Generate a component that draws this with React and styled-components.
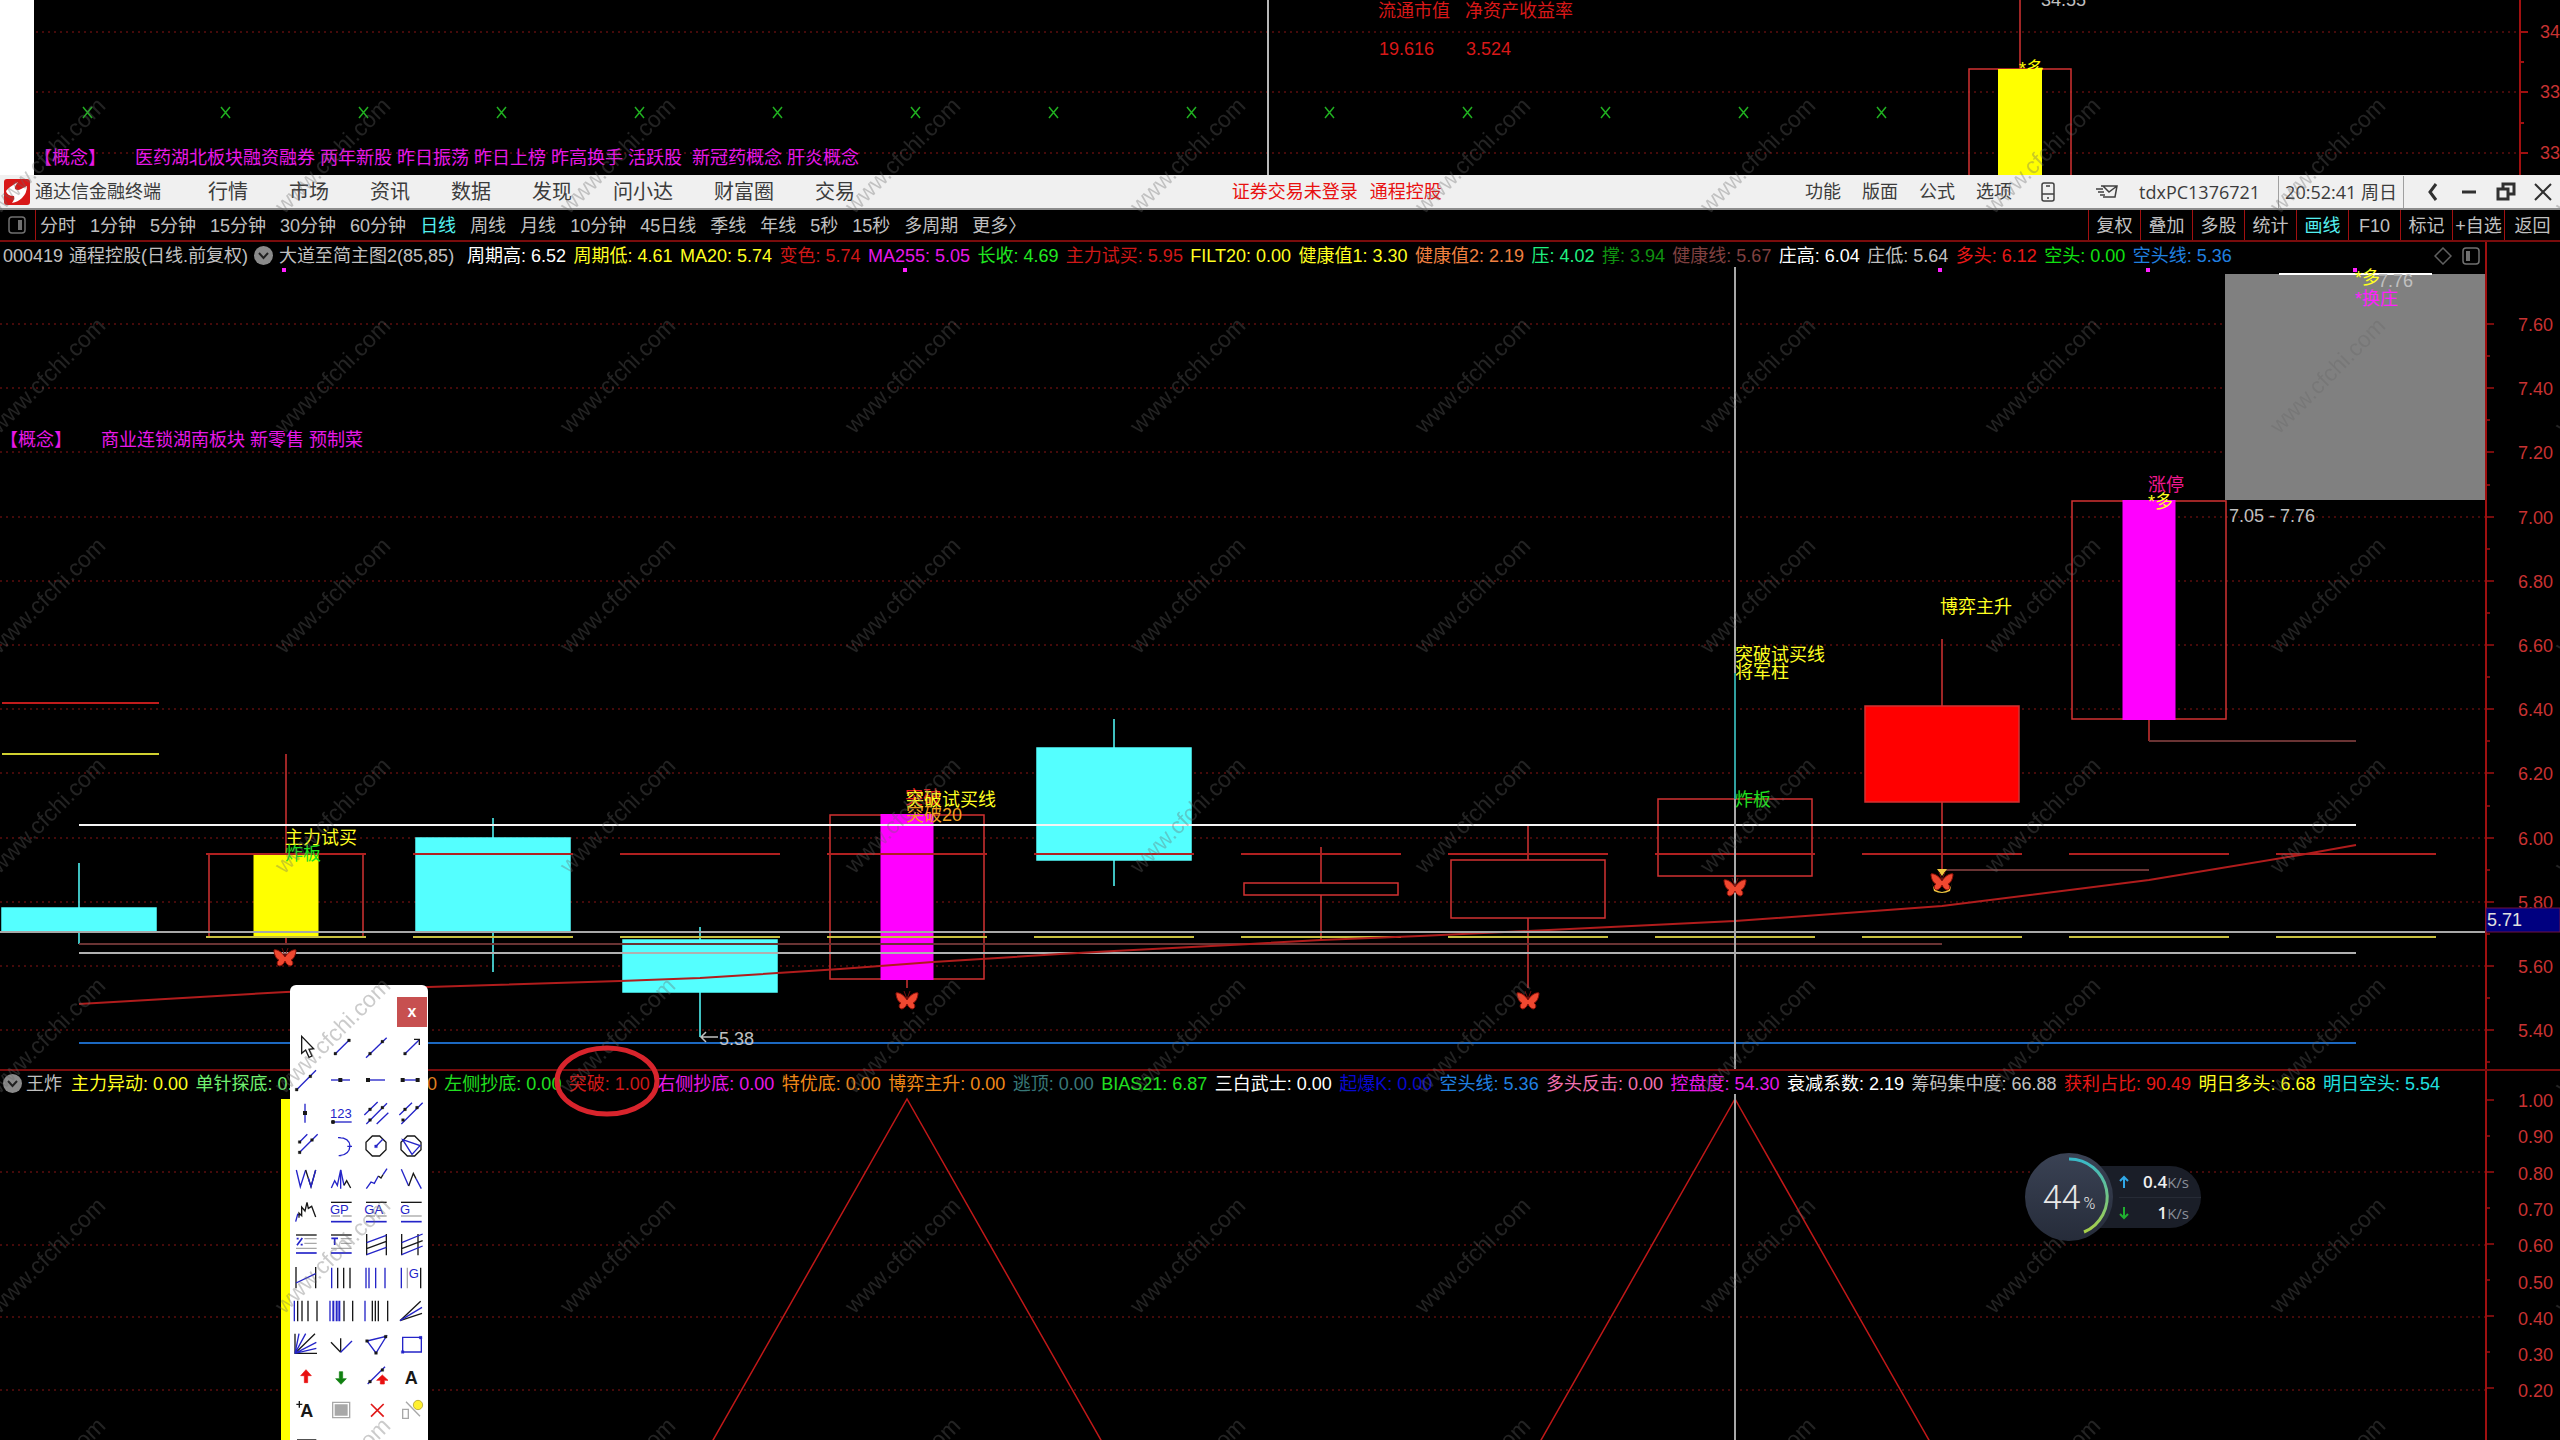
import styled, { createGlobalStyle } from 'styled-components'

const GlobalStyle = createGlobalStyle`
  * {
    box-sizing: border-box;
  }
  body {
    margin: 0;
    background: #000;
    overflow: hidden;
  }
  body, button {
    font-family: 'Liberation Sans', 'Noto Sans CJK SC', sans-serif;
    font-size: 18px;
    line-height: 24px;
  }
  button {
    border: none;
    background: none;
    padding: 0;
    color: inherit;
    white-space: nowrap;
    cursor: pointer;
  }
`
const Page = styled.div`
  position: relative;
  display: flex;
  flex-direction: column;
  min-height: 100vh;
  overflow: hidden;
  color: #c0c0c0;
`
const Chart = styled.svg`
  display: block;
  width: 100%;
  height: auto;
`
const Label = styled.text`
  font-size: 18px;
  fill: ${({ $color }) => $color || '#c0c0c0'};
`
const MenuBar = styled.header`
  display: flex;
  align-items: center;
  height: 35px;
  padding: 0 8px 0 4px;
  background: #f0f0f0;
  border-bottom: 2px solid #8c8c8c;
  color: #3c3c3c;
  white-space: nowrap;
`
const Brand = styled.div`
  display: flex;
  align-items: center;
  gap: 5px;
  width: 204px;

  svg {
    width: 26px;
    height: 26px;
  }
`
const MainMenu = styled.nav`
  display: flex;
  flex: 5;
  gap: 41px;

  button {
    font-size: 20px;
  }
`
const Status = styled.div`
  display: flex;
  gap: 12px;
  color: #e81010;
`
const SideMenu = styled.nav`
  display: flex;
  flex: 3;
  justify-content: flex-end;
  align-items: center;
  gap: 21px;

  svg {
    margin-left: 7px;
  }
`
const Account = styled.div`
  display: flex;
  align-items: center;
  gap: 20px;
  margin-left: 39px;
  padding-right: 18px;
  font-family: 'Open Sans', 'Noto Sans CJK SC', sans-serif;
`
const Clock = styled.time`
  padding: 4px 6px;
  border-left: 1px solid #a0a0a0;
  border-right: 1px solid #a0a0a0;
  font-family: 'Open Sans', 'Noto Sans CJK SC', sans-serif;
`
const WindowButtons = styled.div`
  display: flex;
  align-items: center;
  gap: 18px;
  padding-left: 20px;

  button {
    display: flex;
  }
`
const Toolbar = styled.div`
  display: flex;
  justify-content: space-between;
  height: 32px;
  border-bottom: 2px solid #7a0c0c;
  white-space: nowrap;
`
const Periods = styled.div`
  display: flex;
  align-items: center;
  gap: 14px;
`
const SideToggle = styled.button`
  display: flex;
  align-items: center;
  align-self: stretch;
  width: 36px;
  margin-right: -10px;
  padding-left: 8px;
  border-right: 1px solid #a01010;
`
const Tool = styled.button`
  padding-top: 2px;
  color: ${({ $active }) => ($active ? '#54f0f0' : '#c0c0c0')};
`
const ToolCells = styled.div`
  display: grid;
  grid-template-columns: repeat(8, 52px) 56px;

  button {
    border-left: 1px solid #a01010;
  }
`
const InfoBar = styled.div`
  display: flex;
  align-items: center;
  height: 25px;
  padding-top: 2px;
  padding-right: ${({ $lower }) => ($lower ? 120 : 74)}px;
  border-top: ${({ $lower }) => ($lower ? '2px solid #7a0c0c' : 'none')};
  background: linear-gradient(#a01010, #a01010) right 73px top / 2px 100% no-repeat;
  white-space: nowrap;
`
const InfoTitle = styled.div`
  display: flex;
  align-items: center;
  gap: ${({ $lower }) => ($lower ? 4 : 6)}px;
  width: ${({ $lower }) => ($lower ? 71 : 467)}px;
  padding-left: 3px;
`
const Values = styled.div`
  display: flex;
  flex: 1;
  justify-content: space-between;
`
const Value = styled.span`
  color: ${({ $color }) => $color};
`
const Covered = styled(Value)`
  width: 117px;
  text-align: right;
`
const InfoIcons = styled.div`
  display: flex;
  align-items: center;
  justify-content: flex-end;
  gap: 10px;
  width: 254px;
  padding-right: 6px;
`
const Palette = styled.aside`
  position: absolute;
  top: 985px;
  bottom: 0;
  left: 290px;
  width: 138px;
  overflow: hidden;
  background: #fff;
  border-radius: 6px 6px 0 0;
`
const PaletteHead = styled.div`
  display: flex;
  justify-content: flex-end;
  padding: 12px 1px 3px;

  button {
    width: 30px;
    height: 30px;
    background: #c75050;
    color: #fff;
    font-size: 16px;
    font-weight: bold;
  }
`
const PaletteGrid = styled.div`
  display: grid;
  grid-template-columns: repeat(4, 1fr);
  grid-auto-rows: 33px;
  margin-left: -1px;

  button {
    display: flex;
    align-items: center;
    justify-content: center;
  }
  svg {
    width: 22px;
    height: 22px;
    overflow: visible;
  }
`
const Monitor = styled.div`
  position: absolute;
  top: 1153px;
  left: 2025px;
  display: flex;
  align-items: center;
`
const Gauge = styled.div`
  position: relative;
  z-index: 1;
  display: flex;
  align-items: center;
  justify-content: center;
  gap: 3px;
  width: 88px;
  height: 88px;
  border-radius: 50%;
  background: linear-gradient(#3a4254, #262c3a);
  color: #e8e8e8;
  font-family: Roboto, sans-serif;
  font-size: 34px;
  font-weight: 300;

  svg {
    position: absolute;
    inset: 0;
  }
  small {
    padding-top: 14px;
    font-size: 16px;
  }
`
const Speeds = styled.div`
  width: 102px;
  margin-left: -14px;
  padding-left: 20px;
  border-radius: 0 31px 31px 0;
  background: #1a1e28;
  font-family: 'Open Sans', sans-serif;
`
const Speed = styled.div`
  display: flex;
  align-items: center;
  justify-content: space-between;
  height: 31px;
  padding-right: 12px;
  color: #8a8f98;
  font-size: 15px;

  & + & {
    border-top: 1px solid #262b36;
  }
  b {
    color: #f0f0f0;
    font-size: 17px;
    font-weight: 600;
  }
`
const Overlay = styled.svg`
  position: absolute;
  inset: 0;
  width: 100%;
  height: 100%;
  pointer-events: none;
`

const RED = '#d23232'
const CYAN = '#54ffff'
const GRID = '#8a1414'

const menu = ['行情', '市场', '资讯', '数据', '发现', '问小达', '财富圈', '交易']
const sideMenu = ['功能', '版面', '公式', '选项']
const periods = ['分时', '1分钟', '5分钟', '15分钟', '30分钟', '60分钟', '日线', '周线', '月线', '10分钟', '45日线', '季线', '年线', '5秒', '15秒', '多周期', '更多〉']
const tools = ['复权', '叠加', '多股', '统计', '画线', 'F10', '标记', '+自选', '返回']

const mainValues = [
  ['周期高: 6.52', '#ffffff'],
  ['周期低: 4.61', '#ffff20'],
  ['MA20: 5.74', '#ffff20'],
  ['变色: 5.74', '#d01818'],
  ['MA255: 5.05', '#e818e8'],
  ['长收: 4.69', '#20e820'],
  ['主力试买: 5.95', '#d01818'],
  ['FILT20: 0.00', '#ffff20'],
  ['健康值1: 3.30', '#ffff20'],
  ['健康值2: 2.19', '#f08040'],
  ['压: 4.02', '#20f080'],
  ['撑: 3.94', '#109010'],
  ['健康线: 5.67', '#804040'],
  ['庄高: 6.04', '#ffffff'],
  ['庄低: 5.64', '#c0c0c0'],
  ['多头: 6.12', '#e81818'],
  ['空头: 0.00', '#10e010'],
  ['空头线: 5.36', '#2080e0'],
]
const lowerValues = [
  ['主力异动: 0.00', '#ffff20'],
  ['单针探底: 0.00', '#70f070'],
  ['0.00', '#e08020', true],
  ['左侧抄底: 0.00', '#20e020'],
  ['突破: 1.00', '#d01818'],
  ['右侧抄底: 0.00', '#e818e8'],
  ['特优底: 0.00', '#f08818'],
  ['博弈主升: 0.00', '#f08818'],
  ['逃顶: 0.00', '#387878'],
  ['BIAS21: 6.87', '#20e020'],
  ['三白武士: 0.00', '#ffffff'],
  ['起爆K: 0.00', '#0808d0'],
  ['空头线: 5.36', '#2080e0'],
  ['多头反击: 0.00', '#f070b0'],
  ['控盘度: 54.30', '#e818e8'],
  ['衰减系数: 2.19', '#ffffff'],
  ['筹码集中度: 66.88', '#c0c0c0'],
  ['获利占比: 90.49', '#e81818'],
  ['明日多头: 6.68', '#ffff20'],
  ['明日空头: 5.54', '#20e0e0'],
]

// core is the filled strip inside a hollow candle
const candles = [
  { top: 5.78, bottom: 5.71, high: 5.92, low: 5.67, fill: CYAN },
  { top: 5.95, bottom: 5.69, high: 6.26, low: 5.67, core: '#ffff00', coreWidth: 65 },
  { top: 6.0, bottom: 5.71, high: 6.06, low: 5.58, fill: CYAN },
  { top: 5.68, bottom: 5.52, high: 5.72, low: 5.38, fill: CYAN },
  { top: 6.07, bottom: 5.56, high: 6.07, low: 5.53, core: '#ff00ff', coreWidth: 53 },
  { top: 6.28, bottom: 5.93, high: 6.37, low: 5.85, fill: CYAN },
  { top: 5.86, bottom: 5.82, high: 5.97, low: 5.68 },
  { top: 5.93, bottom: 5.75, high: 6.04, low: 5.53 },
  { top: 6.12, bottom: 5.88, high: 6.12, low: 5.88 },
  { top: 6.41, bottom: 6.11, high: 6.62, low: 5.9, fill: '#ff0000' },
  { top: 7.05, bottom: 6.37, high: 7.05, low: 6.3, core: '#ff00ff', coreWidth: 53 },
]
const cx = (i) => 79 + i * 207
const py = (price) => Math.round(57 + (7.6 - price) * 321)
const range = (n) => Array.from({ length: n }, (_, i) => i)

const Dots = ({ y, from = 0, to = 2485 }) => (
  <line x1={from} x2={to} y1={y} y2={y} stroke={GRID} strokeDasharray='2 4' />
)

const Candle = ({ i, top, bottom, high, low, fill, core, coreWidth }) => {
  const x = cx(i)
  const stroke = fill === CYAN ? CYAN : RED
  return (
    <g>
      <path d={`M${x} ${py(high)}V${py(top)}M${x} ${py(bottom)}V${py(low)}`} stroke={stroke} strokeWidth='1.5' />
      <rect x={x - 77} y={py(top)} width='154' height={py(bottom) - py(top)} fill={fill || 'none'} stroke={stroke} strokeWidth='1.5' />
      {core && <rect x={x - coreWidth / 2} y={py(top) - 1} width={coreWidth} height={py(bottom) - py(top) + 2} fill={core} />}
    </g>
  )
}

const Butterfly = ({ x, y, gold }) => (
  <g transform={`translate(${x} ${y})`}>
    {gold && <path d='M-5 -13H5L0 -6ZM-10 0Q-9 9 0 10Q9 9 10 0L8 9Q0 13 -8 9Z' fill='#f0c840' />}
    <path
      d='M0 -1C-3 -6 -8 -9 -11 -8C-11 -4 -9 1 -6 2C-9 4 -8 8 -5 8C-2 7 -1 5 0 3C1 5 2 7 5 8C8 8 9 4 6 2C9 1 11 -4 11 -8C8 -9 3 -6 0 -1Z'
      fill='#f04830'
      stroke='#901008'
    />
    <path d='M0 -2L-3 -10M0 -2L3 -10' stroke='#701010' />
  </g>
)

const BackChart = () => (
  <Chart viewBox='0 0 2560 175'>
    <rect width='34' height='175' fill='#fff' />
    {[32, 92, 153].map((y) => (
      <Dots key={y} y={y} from={36} to={2520} />
    ))}
    {range(14).map((i) => (
      <path key={i} d={`M${83 + i * 138} 107l9 11m0 -11l-9 11`} stroke='#20b020' strokeWidth='1.5' />
    ))}
    <line x1='1268' x2='1268' y2='175' stroke='#b8b8b8' strokeWidth='2' />
    <Label x='1378' y='17' $color='#d81818'>流通市值</Label>
    <Label x='1465' y='17' $color='#d81818'>净资产收益率</Label>
    <Label x='1379' y='55' $color='#d81818'>19.616</Label>
    <Label x='1466' y='55' $color='#d81818'>3.524</Label>
    <Label x='34' y='164' $color='#e818e8'>【概念】</Label>
    <Label x='135' y='164' $color='#e818e8'>
      {'医药湖北板块融资融券 两年新股 昨日振荡 昨日上榜 昨高换手 活跃股\u00a0 新冠药概念 肝炎概念'}
    </Label>
    <Label x='2041' y='6'>34.55</Label>
    <path d='M2020 0V69M1969 175V69H2071V175' fill='none' stroke={RED} strokeWidth='1.5' />
    <Label x='2019' y='75' $color='#ffff00'>*多</Label>
    <rect x='1998' y='69' width='44' height='106' fill='#ffff00' />
    <path d='M2520 0V175M2520 32h8M2520 92h8M2520 153h8M2520 62h4M2520 123h4' stroke='#a01010' strokeWidth='2' />
    <Label x='2540' y='38' $color='#c83232'>34</Label>
    <Label x='2540' y='98' $color='#c83232'>33</Label>
    <Label x='2540' y='159' $color='#c83232'>33</Label>
  </Chart>
)

const MainChart = () => (
  <Chart viewBox='0 0 2560 802'>
    {range(12).map((i) => (
      <Dots key={i} y={py(7.6 - i * 0.2)} />
    ))}
    <rect x='2225' y='7' width='260' height='226' fill='#808080' />
    <path d='M2279 7H2432' stroke='#fff' strokeWidth='2' />
    {candles.map((c, i) => (
      <Candle key={i} i={i} {...c} />
    ))}

    <path d={`M2 ${py(6.42)}H159`} stroke='#c01c1c' strokeWidth='2' />
    <path d={`M2 ${py(6.26)}H159`} stroke='#d0d030' strokeWidth='2' />
    {range(11).map((i) => (
      <g key={i} strokeWidth='2'>
        <path d={`M${206 + i * 207} ${py(5.95)}h160`} stroke='#b02020' />
        <path d={`M${206 + i * 207} ${py(5.69)}h160`} stroke='#c8c040' />
      </g>
    ))}
    <g fill='none' strokeWidth='2'>
      <path d={`M79 ${py(5.67)}H1942M1942 ${py(5.9)}H2149M2149 ${py(6.3)}H2356`} stroke='#6a3434' />
      <path d={`M79 ${py(5.64)}H2356`} stroke='#b0b0b0' />
      <path d={`M79 ${py(6.04)}H2356`} stroke='#f4f4f4' />
      <path d={`M79 ${py(5.36)}H2356`} stroke='#1c68c0' />
      <path
        d='M79 737L286 725L428 720L493 718L620 714L700 711L840 702L933 695L1060 687L1114 684L1250 677L1321 673L1420 669L1528 664L1735 654L1942 639L2149 613L2300 588L2356 578'
        stroke='#b01c1c'
      />
    </g>

    {[284, 905, 1940, 2148, 2355].map((x) => (
      <rect key={x} x={x - 2} y='1' width='4' height='4' fill='#ff20ff' />
    ))}
    <Label x='0' y='179' $color='#e818e8'>【概念】</Label>
    <Label x='101' y='179' $color='#e818e8'>商业连锁湖南板块 新零售 预制菜</Label>
    <Label x='285' y='577' $color='#ffff20'>主力试买</Label>
    <Label x='285' y='593' $color='#20e020'>炸板</Label>
    <Label x='905' y='537' $color='#e02020'>突破</Label>
    <Label x='906' y='539' $color='#ffff20'>突破试买线</Label>
    <Label x='906' y='554' $color='#f0a020'>突破20</Label>
    <Label x='1735' y='394' $color='#ffff20'>突破试买线</Label>
    <Label x='1735' y='411' $color='#ffff20'>将军柱</Label>
    <Label x='1735' y='539' $color='#20e020'>炸板</Label>
    <Label x='1940' y='346' $color='#ffff20'>博弈主升</Label>
    <Label x='2148' y='224' $color='#f01890'>涨停</Label>
    <Label x='2148' y='241' $color='#ffff20'>*多</Label>
    <Label x='2355' y='17' $color='#ffff20'>*多</Label>
    <Label x='2378' y='20'>7.76</Label>
    <Label x='2355' y='38' $color='#ff20ff'>*换庄</Label>
    <Label x='2229' y='255'>7.05 - 7.76</Label>
    <path d='M718 770H701m5 -5l-5 5l5 5' fill='none' stroke='#c0c0c0' strokeWidth='1.5' />
    <Label x='719' y='778'>5.38</Label>

    <path d={`M0 665H2485`} stroke='#a8a8a8' strokeWidth='2' />
    <path d='M1735 0V802' stroke='#a8a8a8' strokeWidth='2' />
    <path d='M1735 406V532' stroke='#30a0a0' strokeWidth='2' />
    <Butterfly x={285} y={691} />
    <Butterfly x={907} y={734} />
    <Butterfly x={1528} y={734} />
    <Butterfly x={1735} y={621} />
    <Butterfly x={1942} y={615} gold />

    <path d='M2486 0V802' stroke='#a01010' strokeWidth='2' />
    {range(12).map((i) => (
      <g key={i}>
        <path d={`M2486 ${py(7.6 - i * 0.2)}h8M2486 ${py(7.5 - i * 0.2)}h4`} stroke='#a01010' strokeWidth='1.5' />
        <Label x='2518' y={py(7.6 - i * 0.2) + 7} $color='#c83232'>
          {(7.6 - i * 0.2).toFixed(2)}
        </Label>
      </g>
    ))}
    <rect x='2486' y='641' width='74' height='24' fill='#000080' stroke='#701040' />
    <Label x='2487' y='659' $color='#e0e0e0'>5.71</Label>
  </Chart>
)

const levels = ['1.00', '0.90', '0.80', '0.70', '0.60', '0.50', '0.40', '0.30', '0.20']

const LowerChart = () => (
  <Chart viewBox='0 0 2560 346'>
    {[78, 151, 223, 296].map((y) => (
      <Dots key={y} y={y} />
    ))}
    <rect x='281' y='5' width='10' height='341' fill='#ffff00' />
    <path d='M700 369L907 5L1114 369M1528 369L1735 5L1942 369' fill='none' stroke='#c01818' strokeWidth='1.5' />
    <path d='M1735 0V346' stroke='#a8a8a8' strokeWidth='2' />
    <path d='M2486 0V346' stroke='#a01010' strokeWidth='2' />
    {levels.map((level, i) => (
      <g key={level}>
        <path d={`M2486 ${6 + i * 36}h${i % 2 ? 4 : 8}`} stroke='#a01010' strokeWidth='1.5' />
        <Label x='2518' y={13 + Math.round(i * 36.3)} $color='#c83232'>{level}</Label>
      </g>
    ))}
  </Chart>
)

const K = '#181818'
const B = '#2424c8'
const G = '#a8a8a8'
const dot = (x, y) => `M${x - 4} ${y - 4}h8v8h-8z`

// each icon is a list of [path, stroke, fill, width] on a 66 unit square
const icons = [
  { name: '选择', shapes: [['M20 1V52L32 42L42 64L51 60L42 40L56 38Z', K, '#fff', 4]] },
  { name: '线段', shapes: [['M16 53L57 13', B], [dot(16, 53) + dot(57, 13), K, K, 1]] },
  { name: '直线', shapes: [['M3 65L65 5', B], [dot(15, 53) + dot(52, 17), K, K, 1]] },
  { name: '箭头', shapes: [['M15 53L58 11', B], ['M42 10H58V27', K], [dot(15, 53), K, K, 1]] },
  { name: '射线', shapes: [['M5 62L63 4', B], [dot(5, 62) + dot(46, 22), K, K, 1]] },
  { name: '水平直线', shapes: [['M3 33H60', B], [dot(31, 33), K, K, 4]] },
  { name: '水平射线', shapes: [['M9 33H60', B], [dot(9, 33), K, K, 4]] },
  { name: '水平线段', shapes: [['M8 33H53', B], [dot(8, 33) + dot(53, 33), K, K, 4]] },
  { name: '垂直线', shapes: [['M30 5V62', B], [dot(30, 33), K, K, 4]] },
  { name: '价格标注', shapes: [['M9 60H65', B, 'none', 4], [dot(9, 60), K, K, 3]], text: '123', at: [0, 48] },
  { name: '平行线', shapes: [['M-2 39L38 0M4 66L66 4M35 66L70 32', B], [dot(15, 22) + dot(15, 54) + dot(52, 17), K, K, 1]] },
  { name: '平行直线', shapes: [['M-2 39L36 2M4 66L68 2', B], [dot(15, 22) + dot(9, 54) + dot(51, 17), K, K, 1]] },
  { name: '平行射线', shapes: [['M14 21L37 -2M14 52L68 -2', B], [dot(14, 21) + dot(14, 52) + dot(51, 15), K, K, 1]] },
  { name: '圆弧', shapes: [['M26 8Q58 8 60 33Q58 60 28 62M52 34H66M24 8h8M26 62h8', B, 'none', 4]] },
  { name: '圆', shapes: [['M22 3H44L63 22V44L44 63H22L3 44V22Z', K], ['M33 34L54 12', B], [dot(33, 34), B, B, 1]] },
  { name: '外接圆', shapes: [['M22 3H44L63 22V44L44 63H22L3 44V22Z', K], ['M8 14L60 32L36 58Z', B, 'none', 4]] },
  { name: '多浪', shapes: [['M4 6L16 56L32 6', B, 'none', 4], ['M32 6L48 56L62 6', K, 'none', 4], ['M40 30L48 56L62 6', B]] },
  { name: '头肩', shapes: [['M4 60L14 38L22 52L32 6L42 52', B], ['M42 52L50 38L62 60', K], ['M32 6V62', B]] },
  { name: '上升浪', shapes: [['M4 62L18 42L28 46L40 24', B], ['M40 24L48 30L54 20', K], ['M54 20L66 2', B]] },
  { name: '三浪', shapes: [['M4 4L26 54', B], ['M26 54L40 16L48 32', K], ['M48 32L64 62', B]] },
  { name: '八浪', shapes: [['M2 62L8 40L16 42', B], ['M12 50V36L20 44V18L30 30L36 4L40 22L50 16L62 48', K]] },
  { name: '黄金价位', shapes: [['M3 4H65', K, 'none', 4], ['M38 45H65M3 45H30', G], ['M3 62H65', B, 'none', 5]], text: 'GP', at: [0, 39] },
  { name: '黄金目标', shapes: [['M3 4H65', K, 'none', 4], ['M38 45H65M3 45H30', G], ['M3 62H65', B, 'none', 5]], text: 'GA', at: [-2, 39] },
  { name: '黄金分割', shapes: [['M3 4H65', K, 'none', 4], ['M3 45H65', G], ['M3 62H65', B, 'none', 5]], text: 'G', at: [0, 39] },
  { name: '百分比线', shapes: [['M3 3H65', K, 'none', 4], ['M28 14H65M28 28H65M3 43H65', G], ['M3 57H65', B, 'none', 5], ['M6 34L22 12M5 14h6M17 32h6', B, 'none', 5]] },
  { name: '波段线', shapes: [['M3 3H65', K, 'none', 4], ['M32 14H65M32 28H65M3 43H65', G], ['M3 57H65', B, 'none', 5], ['M4 13H24M14 13V33', B, 'none', 5]] },
  { name: '线性回归带', shapes: [['M5 0V64M64 0V64M5 44L64 22', K, 'none', 4], ['M5 26L64 4M5 62L64 40', B]] },
  { name: '延长回归带', shapes: [['M5 0V64M54 0V64M5 44L68 20', K, 'none', 4], ['M5 26L68 0M5 62L68 36', B]] },
  { name: '线性回归线', shapes: [['M3 0V64M62 0V64', K], ['M3 48L62 20', B]] },
  { name: '周期线', shapes: [['M5 2V64', B], ['M23 2V64M41 2V64M60 2V64', K]] },
  { name: '费波拉契线', shapes: [['M3 2V64M12 2V64M32 2V64M60 2V64', B]] },
  { name: '阻速线', shapes: [['M4 2V64', B], ['M22 2V64', G], ['M62 2V64', K]], text: 'G', at: [26, 32] },
  { name: '江恩时间', shapes: [['M-2 2V64', B], ['M8 2V64M21 2V64M39 2V64M66 2V64', K]] },
  { name: '时间周期', shapes: [['M0 2V64', B], ['M10 2V64M20 2V64M28 2V64', B, 'none', 6], ['M42 2V64M68 2V64', K]] },
  { name: '对称周期', shapes: [['M0 2V64', B], ['M22 2V64M31 2V64M40 2V64M68 2V64', K]] },
  { name: '速度线', shapes: [['M0 62L62 4M0 62L66 40', K], ['M0 62L66 22', B]] },
  { name: '甘氏线', shapes: [['M0 2V61H66M0 61L60 2', K, 'none', 4], ['M0 61L12 2M0 61L32 2M0 61L64 28M0 61L64 46', B]] },
  { name: '分叉线', shapes: [['M32 58V16M32 58L3 28', K], ['M32 58L66 24', B]] },
  { name: '三角形', shapes: [['M6 24L64 10L33 60Z', B], [dot(6, 24) + dot(62, 11) + dot(33, 60), K, K, 1]] },
  { name: '矩形', shapes: [['M8 13H64V57H8Z', B, 'none', 4], [dot(8, 57) + dot(62, 14), B, B, 1]] },
  { name: '上涨标记', shapes: [['M33 11L49 29H38V50H28V29H17Z', '#e81010', '#e81010', 2]] },
  { name: '下跌标记', shapes: [['M33 55L49 38H38V17H28V38H17Z', '#108010', '#108010', 2]] },
  { name: '趋势标记', shapes: [['M8 54L60 2', B], [dot(15, 47) + dot(52, 12), K, K, 1], ['M52 27L69 43H58V54H46V43H35Z', '#e81010', '#e81010', 2]] },
  { name: '文字', shapes: [], text: 'A', at: [14, 54], big: true },
  { name: '添加文字', shapes: [['M4 16H22M13 6V26', K, 'none', 4]], text: 'A', at: [16, 54], big: true },
  { name: '属性', shapes: [['M8 10H59V56H8Z', G], ['M16 18H51V48H16Z', G, G]] },
  { name: '删除', shapes: [['M18 15L56 53M56 15L18 53', '#e01818', 'none', 5]] },
  { name: '隐藏', shapes: [['M8 31H25V58H8ZM18 8L60 52', G], ['M40 18a14 14 0 1 0 28 0a14 14 0 1 0 -28 0', '#a09020', '#fff030', 2]] },
  { name: '导出', shapes: [['M8 60V24H62V60', K, 'none', 4], ['M20 34H50', B]] },
  { name: '列表', shapes: [['M8 60V36H64V60M20 36V60M32 36V60M44 36V60M56 36V60M8 44H64', B, 'none', 4]] },
  { name: '图表', shapes: [['M14 60V36H62V60', K, 'none', 4], ['M24 52H34M40 46H52', '#108060']] },
]

const DrawingPalette = () => (
  <Palette>
    <PaletteHead>
      <button aria-label='关闭画线工具'>x</button>
    </PaletteHead>
    <PaletteGrid>
      {icons.map((icon) => (
        <button key={icon.name} aria-label={icon.name}>
          <svg viewBox='0 0 66 66'>
            {icon.shapes.map(([d, stroke, fill, width], i) => (
              <path key={i} d={d} stroke={stroke} fill={fill || 'none'} strokeWidth={width || 4} />
            ))}
            {icon.text && (
              <text
                x={icon.at[0]}
                y={icon.at[1]}
                fontSize={icon.big ? 54 : 39}
                fontWeight={icon.big ? 'bold' : 'normal'}
                fill={icon.big ? K : B}
              >
                {icon.text}
              </text>
            )}
          </svg>
        </button>
      ))}
    </PaletteGrid>
  </Palette>
)

const PaneIcon = ({ flip }) => (
  <svg width='18' height='18' viewBox='0 0 18 18' fill='none' stroke='#707070' strokeWidth='1.5'>
    <rect x='1' y='1' width='16' height='16' rx='3' />
    <rect x={flip ? 4 : 10} y='4' width='4' height='10' fill='#707070' stroke='none' />
  </svg>
)

const Chevron = () => (
  <svg width='19' height='19' viewBox='0 0 19 19'>
    <circle cx='9.5' cy='9.5' r='9.5' fill='#8a8a8a' />
    <path d='M5 7L9.5 12L14 7' fill='none' stroke='#202020' strokeWidth='2' />
  </svg>
)

const App = () => {
  return (
    <>
      <GlobalStyle />
      <Page>
        <BackChart />
        <MenuBar>
          <Brand>
            <svg viewBox='0 0 26 26'>
              <rect width='26' height='26' rx='3' fill='#d81818' />
              <path d='M2 12Q5 8 14 3Q10 8 11 10Q14 12 17 10L23 7Q23 14 18 19Q14 23 8 24Q11 20 10 17Q3 17 2 12Z' fill='#fff' />
            </svg>
            通达信金融终端
          </Brand>
          <MainMenu>
            {menu.map((item) => (
              <button key={item}>{item}</button>
            ))}
          </MainMenu>
          <Status>
            <span>证券交易未登录</span>
            <span>通程控股</span>
          </Status>
          <SideMenu>
            {sideMenu.map((item) => (
              <button key={item}>{item}</button>
            ))}
            <svg width='16' height='20' viewBox='0 0 16 20' fill='none' stroke='#404040' strokeWidth='1.5'>
              <rect x='2' y='1' width='12' height='18' rx='2' />
              <path d='M2 12H14M6 4H10M7 16H9' />
            </svg>
          </SideMenu>
          <Account>
            <svg width='24' height='18' viewBox='0 0 24 18' fill='none' stroke='#404040' strokeWidth='1.5'>
              <path d='M6 3H22L20 14H8M8 3L14 9L22 3M1 6H8M3 9H9M5 12H10' />
            </svg>
            tdxPC1376721
          </Account>
          <Clock>20:52:41 周日</Clock>
          <WindowButtons>
            <button aria-label='后退'>
              <svg width='18' height='20' fill='none' stroke='#303030' strokeWidth='3'>
                <path d='M12 2L6 10L12 18' />
              </svg>
            </button>
            <button aria-label='最小化'>
              <svg width='18' height='20' fill='none' stroke='#303030' strokeWidth='3'>
                <path d='M2 10H16' />
              </svg>
            </button>
            <button aria-label='还原'>
              <svg width='20' height='20' fill='none' stroke='#303030' strokeWidth='3'>
                <path d='M2 7H12V17H2ZM7 7V2H18V12H12' />
              </svg>
            </button>
            <button aria-label='关闭'>
              <svg width='18' height='20' fill='none' stroke='#303030' strokeWidth='2'>
                <path d='M1 2L17 18M17 2L1 18' />
              </svg>
            </button>
          </WindowButtons>
        </MenuBar>
        <Toolbar>
          <Periods>
            <SideToggle aria-label='侧栏'>
              <PaneIcon />
            </SideToggle>
            {periods.map((item) => (
              <Tool key={item} $active={item === '日线'}>{item}</Tool>
            ))}
          </Periods>
          <ToolCells>
            {tools.map((item) => (
              <Tool key={item} $active={item === '画线'}>{item}</Tool>
            ))}
          </ToolCells>
        </Toolbar>
        <InfoBar>
          <InfoTitle>
            <span>000419</span>
            <span>通程控股(日线.前复权)</span>
            <Chevron />
            <span>大道至简主图2(85,85)</span>
          </InfoTitle>
          <Values>
            {mainValues.map(([text, color]) => (
              <Value key={text} $color={color}>{text}</Value>
            ))}
          </Values>
          <InfoIcons>
            <svg width='18' height='18' fill='none' stroke='#606060' strokeWidth='1.5'>
              <path d='M9 1L17 9L9 17L1 9Z' />
            </svg>
            <PaneIcon flip />
          </InfoIcons>
        </InfoBar>
        <MainChart />
        <InfoBar $lower>
          <InfoTitle $lower>
            <Chevron />
            <span>王炸</span>
          </InfoTitle>
          <Values>
            {lowerValues.map(([text, color, covered]) =>
              covered ? (
                <Covered key={text} $color={color}>{text}</Covered>
              ) : (
                <Value key={text} $color={color}>{text}</Value>
              )
            )}
          </Values>
        </InfoBar>
        <LowerChart />
        <DrawingPalette />
        <Monitor>
          <Gauge>
            <svg viewBox='0 0 88 88' fill='none' strokeWidth='3'>
              <defs>
                <linearGradient id='load' x1='0' y1='0' x2='0' y2='1'>
                  <stop offset='0' stopColor='#38b8c8' />
                  <stop offset='1' stopColor='#a8d048' />
                </linearGradient>
              </defs>
              <path d='M44 6A38 38 0 0 1 59 79' stroke='url(#load)' />
            </svg>
            44<small>%</small>
          </Gauge>
          <Speeds>
            <Speed>
              <svg width='10' height='14' fill='none' stroke='#30a8e8' strokeWidth='2'>
                <path d='M5 13V2M1 6L5 2L9 6' />
              </svg>
              <span><b>0.4</b>K/s</span>
            </Speed>
            <Speed>
              <svg width='10' height='14' fill='none' stroke='#20b030' strokeWidth='2'>
                <path d='M5 1V12M1 8L5 12L9 8' />
              </svg>
              <span><b>1</b>K/s</span>
            </Speed>
          </Speeds>
        </Monitor>
        <Overlay>
          <defs>
            <pattern id='mark' width='285' height='220' x='-92' y='48' patternUnits='userSpaceOnUse'>
              <text
                transform='translate(140 108) rotate(-45)'
                textAnchor='middle'
                y='7'
                fontSize='23'
                fill='#686868'
                fillOpacity='0.34'
              >
                www.cfchi.com
              </text>
            </pattern>
          </defs>
          <rect y='90' width='100%' height='100%' fill='url(#mark)' />
          <ellipse cx='607' cy='1081' rx='50' ry='33' fill='none' stroke='#d8242c' strokeWidth='5' />
        </Overlay>
      </Page>
    </>
  )
}

export default App
